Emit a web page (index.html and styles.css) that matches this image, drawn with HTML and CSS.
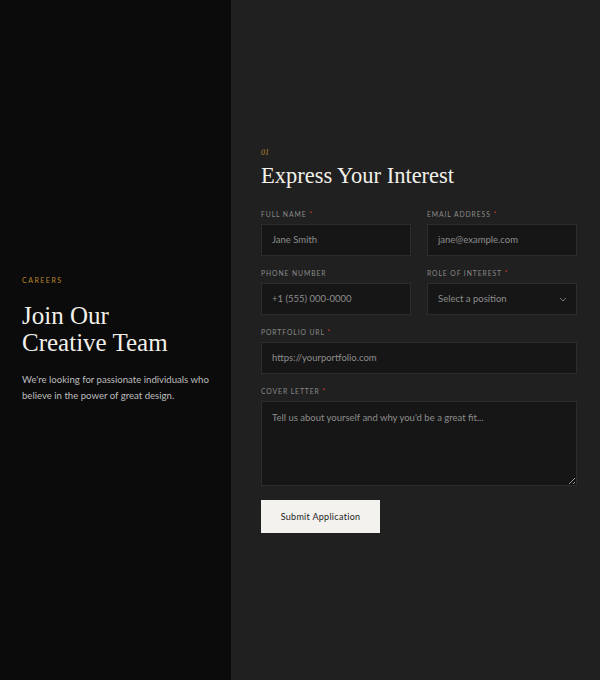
FILE: index.html
```html
<!DOCTYPE html>
<html lang="en">
  <head>
    <meta charset="UTF-8" />
    <meta name="viewport" content="width=device-width, initial-scale=1.0" />
    <title>Careers</title>
    <link rel="stylesheet" href="styles.css">
  </head>
  <body>
    <div class="page">
      <aside class="intro">
        <p class="eyebrow">Careers</p>
        <h1>Join Our<br />Creative Team</h1>
        <p class="lead">We're looking for passionate individuals who believe in the power of great design.</p>
      </aside>

      <main class="form-panel">
        <form class="apply-form">
          <span class="step">01</span>
          <h2>Express Your Interest</h2>

          <div class="row">
            <div class="field">
              <label>Full Name <span class="req">*</span></label>
              <input type="text" placeholder="Jane Smith" />
            </div>
            <div class="field">
              <label>Email Address <span class="req">*</span></label>
              <input type="email" placeholder="jane@example.com" />
            </div>
          </div>

          <div class="row">
            <div class="field">
              <label>Phone Number</label>
              <input type="tel" placeholder="+1 (555) 000-0000" />
            </div>
            <div class="field">
              <label>Role of Interest <span class="req">*</span></label>
              <div class="select">
                <select>
                  <option>Select a position</option>
                </select>
                <svg class="chevron" width="8" height="5" viewBox="0 0 8 5"><path d="M1 1l3 3 3-3" fill="none" stroke="#777" stroke-width="1" /></svg>
              </div>
            </div>
          </div>

          <div class="field">
            <label>Portfolio URL <span class="req">*</span></label>
            <input type="url" placeholder="https://yourportfolio.com" />
          </div>

          <div class="field">
            <label>Cover Letter <span class="req">*</span></label>
            <textarea placeholder="Tell us about yourself and why you'd be a great fit..."></textarea>
          </div>

          <button type="submit">Submit Application</button>
        </form>
      </main>
    </div>
  </body>
</html>
```

FILE: styles.css
```css
body {
  margin: 0;
  padding: 0;
  font-family: "Lato", "Open Sans", sans-serif;
  background-color: #202020;
  color: #ddd;
}

.page {
  display: grid;
  grid-template-columns: 231px 1fr;
  height: 680px;
}

.intro {
  background-color: #0b0b0b;
  padding: 0 14px 0 22px;
  display: flex;
  flex-direction: column;
  justify-content: center;
}

.eyebrow {
  margin: 0 0 18px;
  font-size: 7px;
  letter-spacing: 1.5px;
  text-transform: uppercase;
  color: #b8862b;
}

.intro h1 {
  margin: 0 0 16px;
  font-family: "Liberation Serif", serif;
  font-weight: normal;
  font-size: 25px;
  line-height: 27px;
  color: #f2f0ea;
}

.lead {
  margin: 0;
  font-size: 9.6px;
  line-height: 16px;
  color: #bdbdbd;
}

.form-panel {
  background-color: #202020;
  padding: 0 23px 0 30px;
  display: flex;
  flex-direction: column;
  justify-content: center;
}

.apply-form {
  display: flex;
  flex-direction: column;
}

.step {
  font-family: "Liberation Serif", serif;
  font-style: italic;
  font-size: 8px;
  color: #b8862b;
}

.apply-form h2 {
  margin: 5px 0 20px;
  font-family: "Liberation Serif", serif;
  font-weight: normal;
  font-size: 22.5px;
  line-height: 28px;
  color: #f2f0ea;
}

.row {
  display: grid;
  grid-template-columns: 1fr 1fr;
  gap: 16px;
}

.field {
  display: flex;
  flex-direction: column;
  margin-bottom: 13px;
}

.field label {
  font-size: 6.8px;
  letter-spacing: 0.9px;
  text-transform: uppercase;
  color: #8a8a8a;
  margin-bottom: 6px;
}

.req {
  color: #c0392b;
}

input,
select,
textarea {
  box-sizing: border-box;
  width: 100%;
  height: 32px;
  padding: 0 10px;
  background-color: #161616;
  border: 1px solid #2c2c2c;
  color: #aaa;
  font-family: inherit;
  font-size: 9.5px;
  outline: none;
}

input::placeholder,
textarea::placeholder {
  color: #8d8d8d;
}

.select {
  position: relative;
}

select {
  appearance: none;
  color: #8d8d8d;
}

.chevron {
  position: absolute;
  right: 10px;
  top: 14px;
}

textarea {
  height: 85px;
  padding: 10px;
  resize: vertical;
}

button {
  align-self: flex-start;
  width: 119px;
  height: 33px;
  margin-top: 1px;
  background-color: #f3f2ef;
  color: #222;
  border: none;
  font-family: inherit;
  font-size: 9px;
  letter-spacing: 0.3px;
  cursor: pointer;
}
```
